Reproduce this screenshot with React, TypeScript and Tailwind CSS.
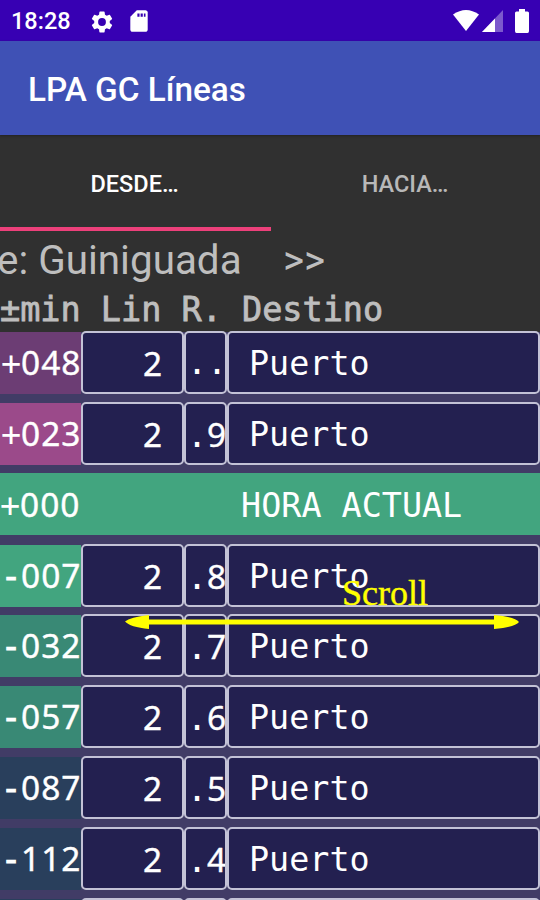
import React from "react";

type Departure = {
  sign: string;
  min: string;
  line: string;
  ramp: string;
  dest: string;
  color: string;
};

const before: Departure[] = [
  { sign: "+", min: "048", line: "2", ramp: ".", dest: "Puerto", color: "bg-[#6c3d74]" },
  { sign: "+", min: "023", line: "2", ramp: "9", dest: "Puerto", color: "bg-[#9b4a8a]" },
];

const after: Departure[] = [
  { sign: "-", min: "007", line: "2", ramp: "8", dest: "Puerto", color: "bg-[#42a57f]" },
  { sign: "-", min: "032", line: "2", ramp: "7", dest: "Puerto", color: "bg-[#398975]" },
  { sign: "-", min: "057", line: "2", ramp: "6", dest: "Puerto", color: "bg-[#398975]" },
  { sign: "-", min: "087", line: "2", ramp: "5", dest: "Puerto", color: "bg-[#293f5c]" },
  { sign: "-", min: "112", line: "2", ramp: "4", dest: "Puerto", color: "bg-[#293f5c]" },
];

const cell =
  "-mt-px h-[63px] shrink-0 rounded-[5px] border-2 border-[#c3c2d6] bg-[#232050] whitespace-pre overflow-hidden";
const digits = "font-['Noto_Sans',sans-serif] tracking-[0.95px] [-webkit-text-stroke:0.4px_white]";

function Row({ item }: { item: Departure }) {
  return (
    <div className="flex h-[62px] shrink-0 leading-[61px]">
      <div className={`h-full w-[81px] shrink-0 pl-[1px] whitespace-pre ${item.color}`}>
        {item.sign === "-" ? <span className="[-webkit-text-stroke:1.2px_white]">-</span> : item.sign}
        <span className={digits}>{item.min}</span>
      </div>
      <div className={`${cell} w-[103px] pl-[60px] leading-[60px]`}>
        <span className={digits}>{item.line}</span>
      </div>
      <div className={`${cell} w-[43px] pl-px leading-[60px]`}>
        .{item.ramp === "." ? "." : <span className={digits}>{item.ramp}</span>}
      </div>
      <div className={`${cell} w-[313px] pl-[20px]`}>{item.dest}</div>
    </div>
  );
}

function StatusBar() {
  return (
    <div className="flex h-[41px] shrink-0 items-center bg-[#3700b3] pr-[10px] pl-[11px] text-white">
      <span className="w-[78px] text-[23.5px] leading-[42px] font-medium">18:28</span>
      <svg className="mt-[2px] h-[26px] w-[26px]" viewBox="0 0 24 24" fill="currentColor">
        <path d="M19.14 12.94c.04-.3.06-.61.06-.94 0-.32-.02-.64-.07-.94l2.03-1.58a.49.49 0 0 0 .12-.61l-1.92-3.32a.49.49 0 0 0-.59-.22l-2.39.96a7 7 0 0 0-1.62-.94l-.36-2.54a.48.48 0 0 0-.48-.41h-3.84a.47.47 0 0 0-.47.41l-.36 2.54c-.59.24-1.13.57-1.62.94l-2.39-.96a.48.48 0 0 0-.59.22L2.74 8.87a.47.47 0 0 0 .12.61l2.03 1.58c-.05.3-.09.63-.09.94s.02.64.07.94l-2.03 1.58a.49.49 0 0 0-.12.61l1.92 3.32c.12.22.37.29.59.22l2.39-.96c.5.38 1.03.7 1.62.94l.36 2.54c.05.24.24.41.48.41h3.84c.24 0 .44-.17.47-.41l.36-2.54a6.8 6.8 0 0 0 1.62-.94l2.39.96c.22.08.47 0 .59-.22l1.92-3.32a.47.47 0 0 0-.12-.61zM12 15.6a3.6 3.6 0 1 1 0-7.2 3.6 3.6 0 0 1 0 7.2" />
      </svg>
      <svg className="ml-[11px] h-[26px] w-[26px]" viewBox="0 0 24 24" fill="currentColor">
        <path d="M18 2h-8L4.02 8 4 20c0 1.1.9 2 2 2h12c1.1 0 2-.9 2-2V4c0-1.1-.9-2-2-2" />
        <path d="M10.500 5h2v3h-2zM13.500 5h2v3h-2zM16.500 5h1.500v3h-1.500z" fill="#3700b3" />
      </svg>
      <div className="ml-auto flex items-center">
        <svg className="h-[22px] w-[26px]" viewBox="0 0 26 22" fill="currentColor">
          <path d="M0 4.500Q13-4.500 26 4.500L13 21Z" />
        </svg>
        <svg className="ml-[3px] h-[22px] w-[22px]" viewBox="0 0 22 22" fill="currentColor">
          <path opacity=".35" d="M0 22 21 0V22Z" />
          <path d="M0 22 13 8.400V22Z" />
        </svg>
        <svg className="mr-px ml-[11px] h-[24px] w-[14px]" viewBox="0 0 14 24" fill="currentColor">
          <path d="M4 0h6v2.500h2.500q1.500 0 1.500 1.500v18q0 2-1.500 2h-11q-1.500 0-1.500-2V4q0-1.500 1.500-1.500H4Z" />
        </svg>
      </div>
    </div>
  );
}

export default function App() {
  return (
    <div className="relative flex h-[900px] w-[540px] flex-col overflow-hidden bg-[#303030] font-[Roboto,sans-serif]">
      <StatusBar />

      <header className="flex h-[94px] shrink-0 items-center bg-[#3f51b5] pt-[3px] pl-[28px] shadow-[0_1px_2px_#222]">
        <h1 className="text-[33.3px] leading-[40px] font-medium whitespace-nowrap text-white">LPA GC Líneas</h1>
      </header>

      <nav className="flex h-[96px] shrink-0 text-[23.5px] leading-[98px] font-medium">
        <div className="h-full w-[271px] border-b-4 border-[#ec407a] pr-[2px] text-center text-white">DESDE…</div>
        <div className="w-[269px] pr-px text-center text-[#b8b8b8]">HACIA…</div>
      </nav>

      <div className="flex h-[54px] shrink-0 text-[40.4px] leading-[60px] whitespace-pre text-[#bebebe]">
        <span className="-ml-[3px] w-[286px]">e: Guiniguada</span>
        <span>{">>"}</span>
      </div>

      <div className="h-[47px] shrink-0 font-['DejaVu_Sans_Mono',monospace] text-[33.5px] leading-[49px] whitespace-pre text-[#bebebe] [-webkit-text-stroke:0.8px_#bebebe]">
        ±min Lin R. Destino
      </div>

      <div className="flex shrink-0 flex-col gap-[8.86px] bg-[#413c66] font-['DejaVu_Sans_Mono',monospace] text-[33.4px] whitespace-pre text-white">
        {before.map((d) => (
          <Row key={d.min} item={d} />
        ))}
        <div className="-mt-px mb-px h-[62px] shrink-0 bg-[#42a57f] leading-[62px]">
          +<span className={digits}>000</span>
          {"        HORA ACTUAL"}
        </div>
        {after.map((d) => (
          <Row key={d.min} item={d} />
        ))}
        {/* top edge of the next row */}
        <div className="flex h-[62px] shrink-0">
          <div className="w-[81px] bg-[#293f5c]" />
          <div className={`${cell} w-[103px]`} />
          <div className={`${cell} w-[43px]`} />
          <div className={`${cell} w-[313px]`} />
        </div>
      </div>

      {/* scroll hint over the list */}
      <div className="absolute top-[573px] left-[342px] font-['Liberation_Serif',serif] text-[36px] leading-[40px] text-[#ffff00] [-webkit-text-stroke:0.4px_#ffff00]">
        Scroll
      </div>
      <svg className="absolute top-[613px] left-[125px] h-[18px] w-[394px]" viewBox="0 0 394 18" fill="#ffff00">
        <path d="M0 8.500Q5 4 24 2V6.500H369V2Q390 4 394 9 390 14 369 16V11.500H24V16Q5 14 0 8.500Z" />
      </svg>
    </div>
  );
}
